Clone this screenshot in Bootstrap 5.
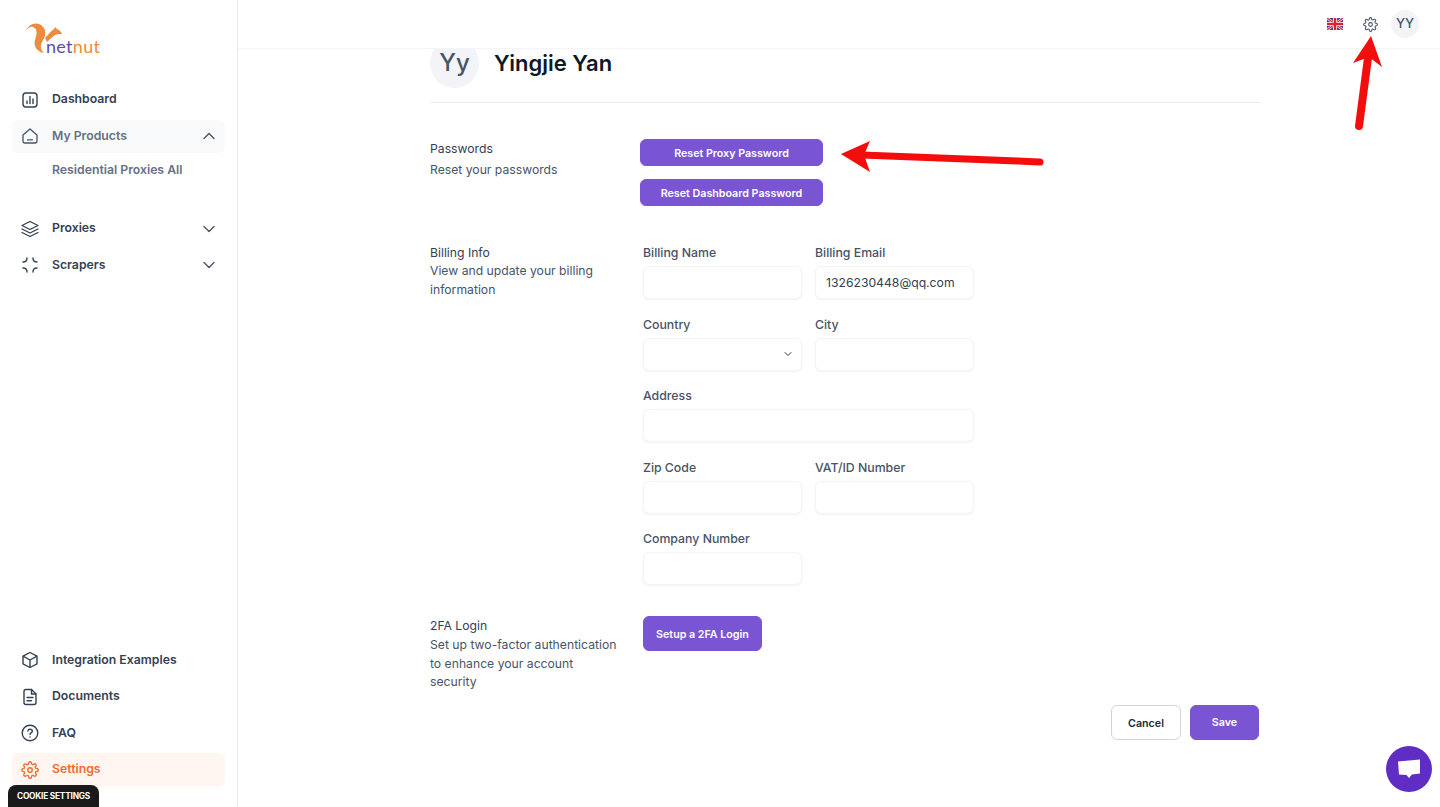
<!DOCTYPE html>
<html lang="en">
<head>
    <meta charset="UTF-8">
    <meta name="viewport" content="width=device-width, initial-scale=1.0">
    <title>Settings</title>
    <link href="https://cdn.jsdelivr.net/npm/bootstrap@5.3.0/dist/css/bootstrap.min.css" rel="stylesheet">
    <style>
        body {
            font-family: Inter, "Liberation Sans", sans-serif;
            color: #344054;
            background: #fff;
            height: 807px;
            overflow: hidden;
        }
        .page-wrap { height: 807px; }
        .side-bar {
            width: 238px;
            flex: none;
            border-right: 1px solid #eaecf0;
            padding: 0 12px 21px;
        }
        .logo-box {
            position: relative;
            height: 70px;
            margin-bottom: 13px;
        }
        .logo-box svg { margin: 20px 0 0 12px; display: block; }
        .logo-word {
            position: absolute;
            left: 34px;
            top: 34px;
            font-family: Lato, sans-serif;
            font-size: 18px;
            line-height: 24px;
            letter-spacing: .3px;
            color: #f08a3c;
        }
        .logo-word span { color: #5b4bb0; }
        .side-item {
            display: flex;
            align-items: center;
            height: 33px;
            margin-bottom: 3.5px;
            padding: 0 9px;
            font-size: 12.25px;
            font-weight: 600;
            color: #344054;
            border-radius: 6px;
            text-decoration: none;
        }
        .side-item svg.item-icon { margin-right: 13px; flex: none; }
        .side-item svg.chev { margin-left: auto; flex: none; }
        .item-open { background: #f9fafb; color: #667085; }
        .item-active { background: #fff6f1; color: #f26b2b; }
        .side-sub {
            font-size: 12.25px;
            font-weight: 600;
            color: #667085;
            padding-left: 40px;
            line-height: 20px;
            margin: 3.5px 0 32.5px;
        }
        .main-col { min-width: 0; position: relative; }
        .top-strip {
            height: 49px;
            flex: none;
            border-bottom: 1px solid #f2f4f7;
            background: #fff;
            padding-right: 21px;
            gap: 18px;
        }
        .flag-icon { margin-right: 2px; }
        .top-avatar {
            width: 28px;
            height: 28px;
            margin-left: -5px;
            border-radius: 50%;
            background: #f2f4f7;
            font-size: 13px;
            font-weight: 500;
            color: #475467;
        }
        .scroll-clip { overflow: hidden; flex: 1; }
        .form-area { width: 831px; margin: -11px 0 0 192px; }
        .head-row {
            gap: 15px;
            height: 65px;
            padding-bottom: 15px;
            border-bottom: 1px solid #eaecf0;
            margin-bottom: 36px;
        }
        .big-avatar {
            width: 49px;
            height: 50px;
            border-radius: 50%;
            background: #f2f4f7;
            font-size: 24px;
            font-weight: 500;
            color: #475467;
        }
        .user-name {
            font-size: 22px;
            font-weight: 600;
            color: #101828;
            margin: 0;
            line-height: 30px;
        }
        .set-row { display: flex; }
        .set-left { width: 213px; flex: none; font-size: 12.2px; line-height: 18.4px; color: #475467; padding-right: 20px; }
        .set-title { color: #344054; }
        .set-title.pw-title { margin-bottom: 3px; line-height: 19px; }
        .pw-row { margin-bottom: 36px; }
        .bill-row { margin-bottom: 31px; }
        .bill-row .set-left { padding-top: 2px; }
        .twofa-row .set-left { padding-top: 1px; }
        .twofa-row .set-title { margin-bottom: 1px; }
        .purple-btn {
            background: #7a55d3;
            border: 1px solid #7a55d3;
            color: #fff;
            font-size: 10.7px;
            font-weight: 600;
            border-radius: 6px;
            padding: 3px 0 0;
            line-height: 1;
        }
        .purple-btn:hover { background: #6d48c6; color: #fff; }
        .pw-btns { margin-left: -3px; gap: 13px; width: 183px; }
        .pw-btns .purple-btn { height: 27px; padding-top: 4px; }
        .bill-grid {
            display: grid;
            grid-template-columns: 159px 159px;
            column-gap: 13px;
            row-gap: 14.5px;
            width: 331px;
        }
        .span-two { grid-column: span 2; }
        .f-label {
            display: block;
            font-size: 12.3px;
            font-weight: 500;
            line-height: 21px;
            margin-bottom: 3px;
            color: #475467;
        }
        .f-input.form-control, .f-input.form-select {
            height: 33px;
            min-height: 33px;
            font-size: 12.2px;
            color: #344054;
            border: 1px solid #f2f4f7;
            border-radius: 6px;
            padding: 0 10px;
            box-shadow: 0 1px 2px rgba(16, 24, 40, .05);
        }
        .f-input.form-select {
            background-size: 10px 8px;
            background-position: right 8px center;
        }
        .footer-btns { gap: 9px; margin: 13px 2px 0 0; }
        .footer-btns .btn { width: 70px; height: 35px; font-size: 10.7px; font-weight: 600; border-radius: 6px; padding: 3px 0 0; }
        .footer-btns .purple-btn { width: 69px; }
        .plain-btn { background: #fff; border: 1px solid #d0d5dd; color: #1d2939; }
        .two-btn { width: 119px; height: 35px; }
        .cookie-tab {
            position: fixed;
            left: 8px;
            bottom: 0;
            width: 91px;
            height: 22px;
            background: #1a1a1a;
            color: #fff;
            border-radius: 8px 8px 0 0;
            font-size: 8.3px;
            font-weight: 700;
            letter-spacing: -.2px;
        }
        .chat-fab {
            position: fixed;
            left: 1386px;
            top: 746px;
            width: 46px;
            height: 46px;
            border-radius: 50%;
            background: #5f2dc4;
        }
        .red-mark { position: fixed; left: 0; top: 0; pointer-events: none; }
    </style>
</head>
<body>
<div class="d-flex page-wrap">
    <aside class="side-bar d-flex flex-column">
        <div class="logo-box">
            <svg width="50" height="36" viewBox="0 0 50 36" fill="#f08a3c">
                <path d="M1 12C4 5 10 2 15 4C22 7 23 14 19 20C16 25 16 29 20 33C14 32 9 27 11 20C13 14 14 9 9 7C6 6 3 9 1 12Z"/>
                <path d="M21 18C24 15 27 11 30 9L31 7L33 9C36 10 37 12 38 14C35 14 33 14 31 15C28 17 26 19 23 22Z"/>
            </svg>
            <div class="logo-word"><span>net</span>nut</div>
        </div>
        <a class="side-item" href="#">
            <svg class="item-icon" width="18" height="18" viewBox="0 0 18 18" fill="none" stroke="#344054" stroke-width="1.4" stroke-linecap="round"><rect x="2" y="2" width="14" height="14" rx="3"/><path d="M6 12.5V10M9 12.5V5.5M12 12.5V8"/></svg>
            Dashboard
        </a>
        <a class="side-item item-open" href="#">
            <svg class="item-icon" width="18" height="18" viewBox="0 0 18 18" fill="none" stroke="#475467" stroke-width="1.3" stroke-linecap="round" stroke-linejoin="round"><path d="M2 8L9 2L16 8V14C16 15.2 15.2 16 14 16H4C2.8 16 2 15.2 2 14Z"/><path d="M6.5 12.8H11.5"/></svg>
            My Products
            <svg class="chev" width="14" height="14" viewBox="0 0 14 14" fill="none" stroke="#475467" stroke-width="1.4" stroke-linecap="round" stroke-linejoin="round"><path d="M2 9.5L7 4.5L12 9.5"/></svg>
        </a>
        <div class="side-sub">Residential Proxies All</div>
        <a class="side-item" href="#">
            <svg class="item-icon" width="18" height="18" viewBox="0 0 18 18" fill="none" stroke="#344054" stroke-width="1.3" stroke-linecap="round" stroke-linejoin="round"><path d="M9 1.5L17 5.5L9 9.5L1 5.5Z"/><path d="M1 9L9 13L17 9"/><path d="M1 12.5L9 16.5L17 12.5"/></svg>
            Proxies
            <svg class="chev" width="14" height="14" viewBox="0 0 14 14" fill="none" stroke="#475467" stroke-width="1.4" stroke-linecap="round" stroke-linejoin="round"><path d="M2 4.5L7 9.5L12 4.5"/></svg>
        </a>
        <a class="side-item" href="#">
            <svg class="item-icon" width="18" height="18" viewBox="0 0 18 18" fill="none" stroke="#344054" stroke-width="1.4" stroke-linecap="round"><path d="M2 6C4.5 6 6 5 6 2M12 2C12 5 13.5 6 16 6M2 12C4.5 12 6 13 6 16M12 16C12 13 13.5 12 16 12"/></svg>
            Scrapers
            <svg class="chev" width="14" height="14" viewBox="0 0 14 14" fill="none" stroke="#475467" stroke-width="1.4" stroke-linecap="round" stroke-linejoin="round"><path d="M2 4.5L7 9.5L12 4.5"/></svg>
        </a>
        <div class="mt-auto">
            <a class="side-item" href="#">
                <svg class="item-icon" width="18" height="18" viewBox="0 0 18 18" fill="none" stroke="#344054" stroke-width="1.4" stroke-linejoin="round"><path d="M9 1.5L16 5.2V12.8L9 16.5L2 12.8V5.2Z"/><path d="M2 5.2L9 9L16 5.2M9 9V16.5"/></svg>
                Integration Examples
            </a>
            <a class="side-item" href="#">
                <svg class="item-icon" width="18" height="18" viewBox="0 0 18 18" fill="none" stroke="#344054" stroke-width="1.4" stroke-linecap="round" stroke-linejoin="round"><path d="M10.5 1.5H5C3.8 1.5 3 2.3 3 3.5V14.5C3 15.7 3.8 16.5 5 16.5H13C14.2 16.5 15 15.7 15 14.5V6Z"/><path d="M10.5 1.5V6H15M6 9.5H12M6 12.8H10.5"/></svg>
                Documents
            </a>
            <a class="side-item" href="#">
                <svg class="item-icon" width="18" height="18" viewBox="0 0 18 18" fill="none" stroke="#344054" stroke-width="1.4" stroke-linecap="round"><circle cx="9" cy="9" r="7.8"/><path d="M6.8 7C7 5.8 8 5.2 9 5.2C10.3 5.2 11.3 6 11.3 7.2C11.3 8.8 9 9 9 10.5M9 12.9V13"/></svg>
                FAQ
            </a>
            <a class="side-item item-active mb-0" href="#">
                <svg class="item-icon" width="18" height="18" viewBox="0 0 24 24" fill="none" stroke="#f26b2b" stroke-width="1.8" stroke-linecap="round" stroke-linejoin="round"><circle cx="12" cy="12" r="3"/><path d="M19.4 15a1.65 1.65 0 0 0 .33 1.82l.06.06a2 2 0 1 1-2.83 2.83l-.06-.06a1.65 1.65 0 0 0-2.82 1.17V21a2 2 0 1 1-4 0v-.09A1.65 1.65 0 0 0 7.17 19.74l-.06.06a2 2 0 1 1-2.83-2.83l.06-.06a1.65 1.65 0 0 0-1.17-2.82H3a2 2 0 1 1 0-4h.09a1.65 1.65 0 0 0 1.17-2.83l-.06-.06a2 2 0 1 1 2.83-2.83l.06.06A1.65 1.65 0 0 0 10 3.09V3a2 2 0 1 1 4 0v.09a1.65 1.65 0 0 0 2.83 1.17l.06-.06a2 2 0 1 1 2.83 2.83l-.06.06A1.65 1.65 0 0 0 20.91 10H21a2 2 0 1 1 0 4h-.09a1.65 1.65 0 0 0-1.51 1z"/></svg>
                Settings
            </a>
        </div>
    </aside>

    <div class="main-col flex-grow-1 d-flex flex-column">
        <div class="top-strip d-flex align-items-center justify-content-end">
            <svg class="flag-icon" width="16" height="12" viewBox="0 0 16 12">
                <rect width="16" height="12" fill="#4a3f9a"/>
                <path d="M0 0L16 12M16 0L0 12" stroke="#fff" stroke-width="2.4"/>
                <path d="M0 0L16 12M16 0L0 12" stroke="#e2202f" stroke-width="1.2"/>
                <path d="M8 0V12M0 6H16" stroke="#fff" stroke-width="4"/>
                <path d="M8 0V12M0 6H16" stroke="#e2202f" stroke-width="2.6"/>
            </svg>
            <svg width="15" height="15" viewBox="0 0 24 24" fill="none" stroke="#475467" stroke-width="1.7" stroke-linecap="round" stroke-linejoin="round"><circle cx="12" cy="12" r="3"/><path d="M19.4 15a1.65 1.65 0 0 0 .33 1.82l.06.06a2 2 0 1 1-2.83 2.83l-.06-.06a1.65 1.65 0 0 0-2.82 1.17V21a2 2 0 1 1-4 0v-.09A1.65 1.65 0 0 0 7.17 19.74l-.06.06a2 2 0 1 1-2.83-2.83l.06-.06a1.65 1.65 0 0 0-1.17-2.82H3a2 2 0 1 1 0-4h.09a1.65 1.65 0 0 0 1.17-2.83l-.06-.06a2 2 0 1 1 2.83-2.83l.06.06A1.65 1.65 0 0 0 10 3.09V3a2 2 0 1 1 4 0v.09a1.65 1.65 0 0 0 2.83 1.17l.06-.06a2 2 0 1 1 2.83 2.83l-.06.06A1.65 1.65 0 0 0 20.91 10H21a2 2 0 1 1 0 4h-.09a1.65 1.65 0 0 0-1.51 1z"/></svg>
            <div class="top-avatar d-flex align-items-center justify-content-center">YY</div>
        </div>

        <div class="scroll-clip">
            <div class="form-area">
                <div class="head-row d-flex align-items-center">
                    <div class="big-avatar d-flex align-items-center justify-content-center">Yy</div>
                    <h1 class="user-name">Yingjie Yan</h1>
                </div>

                <div class="set-row pw-row">
                    <div class="set-left">
                        <div class="set-title pw-title">Passwords</div>
                        <div>Reset your passwords</div>
                    </div>
                    <div class="pw-btns d-flex flex-column">
                        <button type="button" class="btn purple-btn">Reset Proxy Password</button>
                        <button type="button" class="btn purple-btn">Reset Dashboard Password</button>
                    </div>
                </div>

                <div class="set-row bill-row">
                    <div class="set-left">
                        <div class="set-title">Billing Info</div>
                        <div>View and update your billing information</div>
                    </div>
                    <div class="bill-grid">
                        <div>
                            <label class="f-label">Billing Name</label>
                            <input type="text" class="form-control f-input">
                        </div>
                        <div>
                            <label class="f-label">Billing Email</label>
                            <input type="text" class="form-control f-input" value="1326230448@qq.com">
                        </div>
                        <div>
                            <label class="f-label">Country</label>
                            <select class="form-select f-input"><option></option></select>
                        </div>
                        <div>
                            <label class="f-label">City</label>
                            <input type="text" class="form-control f-input">
                        </div>
                        <div class="span-two">
                            <label class="f-label">Address</label>
                            <input type="text" class="form-control f-input">
                        </div>
                        <div>
                            <label class="f-label">Zip Code</label>
                            <input type="text" class="form-control f-input">
                        </div>
                        <div>
                            <label class="f-label">VAT/ID Number</label>
                            <input type="text" class="form-control f-input">
                        </div>
                        <div>
                            <label class="f-label">Company Number</label>
                            <input type="text" class="form-control f-input">
                        </div>
                    </div>
                </div>

                <div class="set-row twofa-row">
                    <div class="set-left">
                        <div class="set-title">2FA Login</div>
                        <div>Set up two-factor authentication to enhance your account security</div>
                    </div>
                    <button type="button" class="btn purple-btn two-btn">Setup a 2FA Login</button>
                </div>

                <div class="footer-btns d-flex justify-content-end">
                    <button type="button" class="btn plain-btn">Cancel</button>
                    <button type="button" class="btn purple-btn">Save</button>
                </div>
            </div>
        </div>
    </div>
</div>

<div class="cookie-tab d-flex align-items-center justify-content-center">COOKIE SETTINGS</div>

<div class="chat-fab d-flex align-items-center justify-content-center">
    <svg width="24" height="22" viewBox="0 0 24 22"><path d="M1 3.5L23 1.5V15.5L15 16.5L12 20L9.5 17L2 16.5Z" fill="#fff"/></svg>
</div>

<!-- red annotation arrows drawn on top of the shot -->
<svg class="red-mark" width="1440" height="807" viewBox="0 0 1440 807" fill="none">
    <path d="M1040 162L862 155" stroke="#f40d0d" stroke-width="7" stroke-linecap="round"/>
    <path d="M841 154L870 141L864 155L870 172Z" fill="#f40d0d"/>
    <path d="M1359 126L1368 58" stroke="#f40d0d" stroke-width="8" stroke-linecap="round"/>
    <path d="M1371 36L1353 63L1369 57L1382 67Z" fill="#f40d0d"/>
</svg>

<script src="https://cdn.jsdelivr.net/npm/bootstrap@5.3.0/dist/js/bootstrap.bundle.min.js"></script>
</body>
</html>
